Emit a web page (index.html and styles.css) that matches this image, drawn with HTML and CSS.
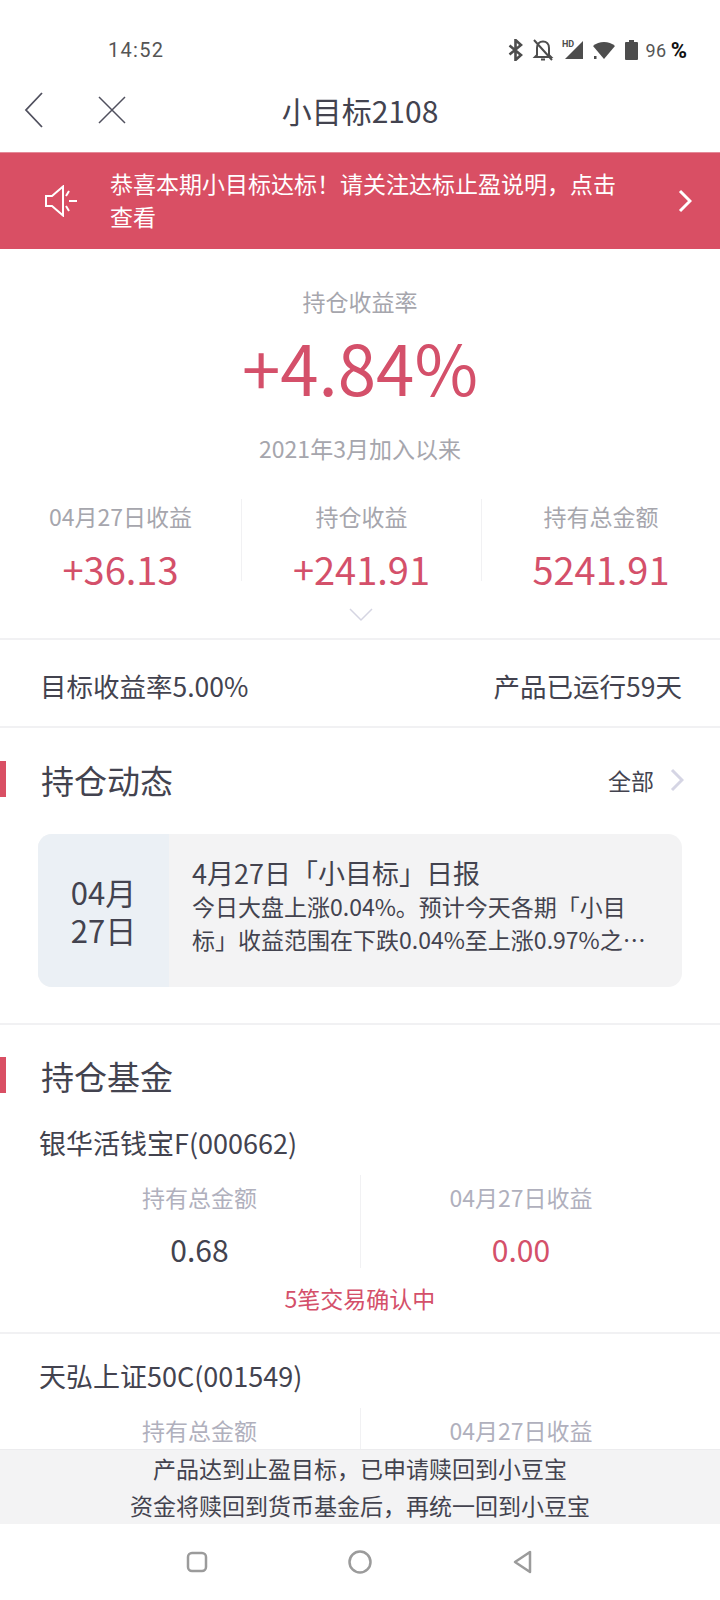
FILE: index.html
```html
<!DOCTYPE html>
<html lang="zh-CN">
<head>
  <meta charset="UTF-8">
  <meta name="viewport" content="width=device-width, initial-scale=1.0">
  <title>小目标2108</title>
  <link rel="stylesheet" href="styles.css">
</head>
<body>
  <div class="phone">
    <!-- Status bar -->
    <div class="status-bar">
      <span class="time">14:52</span>
      <div class="status-icons">
        <svg width="16" height="22" viewBox="0 0 16 22"><path d="M1.5 6.500 13 16l-5.500 5V1L13 6 1.500 15.500" fill="none" stroke="#4d4d4d" stroke-width="2.600"/></svg>
        <svg width="22" height="24" viewBox="0 0 22 24"><path d="M5 17V10c0-4 2.500-6.500 6-6.500s6 2.500 6 6.500v7l2 2H3zM9 21.500h4M2 2l18 20" fill="none" stroke="#4d4d4d" stroke-width="2"/></svg>
        <svg width="22" height="22" viewBox="0 0 22 22"><path d="M21 2v18H3z" fill="#4d4d4d"/><text x="0" y="8" class="hd">HD</text></svg>
        <svg width="24" height="22" viewBox="0 0 24 22"><path d="M1 7c6-5.500 16-5.500 22 0L12 20z" fill="#4d4d4d"/><rect x="2" y="17" width="2.500" height="3" fill="#4d4d4d"/></svg>
        <svg class="battery-icon" width="13" height="22" viewBox="0 0 13 22"><path d="M4 1h5v2h3a1 1 0 0 1 1 1v16a1 1 0 0 1-1 1H1a1 1 0 0 1-1-1V4a1 1 0 0 1 1-1h3z" fill="#4d4d4d"/></svg>
        <span class="battery">96</span>
        <span class="percent">%</span>
      </div>
    </div>

    <!-- Nav -->
    <header class="nav">
      <svg class="nav-back" width="20" height="36" viewBox="0 0 20 36"><path d="M18 1 2 18l16 17" fill="none" stroke="#50505e" stroke-width="1.800"/></svg>
      <svg class="nav-close" width="28" height="28" viewBox="0 0 28 28"><path d="M1 1l26 26M27 1 1 27" fill="none" stroke="#50505e" stroke-width="1.500"/></svg>
      <h1>小目标2108</h1>
    </header>

    <!-- Notice -->
    <a class="notice">
      <svg class="notice-icon" width="34" height="32" viewBox="0 0 34 32"><path d="M2 11h6L19 1.500v29L8 21H2z M25 6l-3 5M25 16h8M25 26l-3-5" fill="none" stroke="#fff" stroke-width="2"/></svg>
      <p>恭喜本期小目标达标！请关注达标止盈说明，点击查看</p>
      <svg class="notice-arrow" width="14" height="24" viewBox="0 0 14 24"><path d="M2 2l10 10L2 22" fill="none" stroke="#fff" stroke-width="3"/></svg>
    </a>

    <!-- Summary -->
    <section class="summary">
      <div class="summary-label">持仓收益率</div>
      <div class="summary-rate">+4.84%</div>
      <div class="summary-label since">2021年3月加入以来</div>
      <div class="stats">
        <div class="stat"><span class="stat-label">04月27日收益</span><span class="stat-value">+36.13</span></div>
        <div class="stat"><span class="stat-label">持仓收益</span><span class="stat-value">+241.91</span></div>
        <div class="stat"><span class="stat-label">持有总金额</span><span class="stat-value">5241.91</span></div>
      </div>
      <svg class="expand" width="24" height="14" viewBox="0 0 24 14"><path d="M1 1l11 11L23 1" fill="none" stroke="#d5d5e2" stroke-width="1.500"/></svg>
    </section>

    <div class="target-row">
      <span>目标收益率5.00%</span>
      <span>产品已运行59天</span>
    </div>

    <!-- Holdings news -->
    <section class="block news">
      <div class="block-head">
        <h2>持仓动态</h2>
        <span class="more">全部
          <svg width="14" height="24" viewBox="0 0 14 24"><path d="M2 2l10 10L2 22" fill="none" stroke="#d5d5e4" stroke-width="3"/></svg>
        </span>
      </div>
      <div class="news-card">
        <div class="news-date">04月<br>27日</div>
        <div class="news-body">
          <h3>4月27日「小目标」日报</h3>
          <p>今日大盘上涨0.04%。预计今天各期「小目标」收益范围在下跌0.04%至上涨0.97%之间，具体以实际收益为准。</p>
        </div>
      </div>
    </section>

    <!-- Funds -->
    <section class="funds">
      <div class="block-head">
        <h2>持仓基金</h2>
      </div>
      <div class="fund fund-first">
        <div class="fund-name">银华活钱宝F(000662)</div>
        <div class="fund-cols">
          <div class="fund-col"><span class="fund-label">持有总金额</span><span class="fund-value">0.68</span></div>
          <div class="fund-col"><span class="fund-label">04月27日收益</span><span class="fund-value red">0.00</span></div>
        </div>
        <div class="fund-note">5笔交易确认中</div>
      </div>
      <div class="fund">
        <div class="fund-name">天弘上证50C(001549)</div>
        <div class="fund-cols">
          <div class="fund-col"><span class="fund-label">持有总金额</span><span class="fund-value">1.20</span></div>
          <div class="fund-col"><span class="fund-label">04月27日收益</span><span class="fund-value red">0.00</span></div>
        </div>
      </div>
    </section>

    <!-- Bottom notice + system nav -->
    <div class="bottom">
      <div class="bottom-tip">
        <p>产品达到止盈目标，已申请赎回到小豆宝</p>
        <p>资金将赎回到货币基金后，再统一回到小豆宝</p>
      </div>
      <nav class="sys-nav">
        <svg width="22" height="24" viewBox="0 0 22 24"><rect x="2" y="3" width="18" height="18" rx="4" fill="none" stroke="#9b9b9b" stroke-width="2.500"/></svg>
        <svg width="26" height="26" viewBox="0 0 26 26"><circle cx="13" cy="13" r="10.500" fill="none" stroke="#9b9b9b" stroke-width="2.500"/></svg>
        <svg width="22" height="26" viewBox="0 0 22 26"><path d="M18 3v20L3 13z" fill="none" stroke="#9b9b9b" stroke-width="2.500" stroke-linejoin="round"/></svg>
      </nav>
    </div>
  </div>
</body>
</html>
```

FILE: styles.css
```css
/* General */
* {
  box-sizing: border-box;
}

body {
  margin: 0;
  background: #fff;
  font-family: "Noto Sans CJK SC", "Noto Sans", sans-serif;
  color: #43434f;
}

h1, h2, h3, p {
  margin: 0;
  font-weight: 400;
}

.phone {
  position: relative;
  width: 720px;
  height: 1600px;
  overflow: hidden;
}

/* Status bar */
.status-bar {
  height: 78px;
  padding: 36px 33px 0 108px;
  display: flex;
  justify-content: space-between;
  align-items: flex-start;
  font-family: Roboto, sans-serif;
  color: #555;
}

.time {
  font-size: 20px;
  line-height: 28px;
  letter-spacing: 1.300px;
}

.status-icons {
  display: flex;
  align-items: center;
  gap: 8px;
  height: 28px;
}

.battery-icon {
  margin-left: 1px;
}

.hd {
  font: 700 9px Roboto, sans-serif;
  fill: #4d4d4d;
}

.battery {
  font-size: 18px;
  letter-spacing: 0.5px;
}

.percent {
  font-size: 22px;
  font-weight: 700;
  color: #111;
  margin-left: -4px;
}

/* Nav */
.nav {
  position: relative;
  height: 74px;
  display: flex;
  align-items: center;
  justify-content: center;
}

.nav h1 {
  font-size: 30px;
  line-height: 40px;
  margin-bottom: 10px;
}

.nav-back {
  position: absolute;
  left: 24px;
  top: 14px;
}

.nav-close {
  position: absolute;
  left: 98px;
  top: 18px;
}

/* Notice */
.notice {
  height: 97px;
  background: #d94f64;
  color: #fff;
  display: flex;
  align-items: center;
  padding: 0 28px 0 44px;
  border-top: 1px solid #e48a98;
}

.notice-icon {
  flex: none;
}

.notice p {
  flex: 1;
  margin: 0 50px 2px 32px;
  font-size: 23px;
  line-height: 33px;
}

.notice-arrow {
  flex: none;
}

/* Summary */
.summary {
  height: 391px;
  padding-top: 35px;
  text-align: center;
  position: relative;
  border-bottom: 2px solid #f1f1f3;
}

.summary-label {
  font-size: 23px;
  line-height: 34px;
  color: #a6a6ad;
}

.summary-rate {
  font-size: 69px;
  font-weight: 400;
  line-height: 94px;
  color: #d4506a;
  margin-top: 1px;
}

.since {
  margin-top: 18px;
}

.stats {
  display: grid;
  grid-template-columns: 241px 240px 239px;
  margin-top: 34px;
}

.stat {
  display: flex;
  flex-direction: column;
  align-items: center;
  height: 82px;
  border-left: 1px solid #f1f1f3;
}

.stat:first-child {
  border-left: none;
}

.stat-label {
  font-size: 23px;
  line-height: 34px;
  color: #a6a6ad;
}

.stat-value {
  font-size: 38px;
  line-height: 52px;
  margin-top: 10px;
  color: #d4506a;
}

.expand {
  position: absolute;
  left: 349px;
  top: 359px;
}

.target-row {
  height: 88px;
  display: flex;
  justify-content: space-between;
  align-items: center;
  padding: 4px 38px 0 40px;
  font-size: 26.500px;
  border-bottom: 2px solid #f1f1f3;
}

/* Blocks */
.block {
  border-bottom: 2px solid #f1f1f3;
}

.block-head {
  height: 74px;
  display: flex;
  align-items: center;
  justify-content: space-between;
  padding: 0 36px 0 41px;
  position: relative;
}

.block-head::before {
  content: "";
  position: absolute;
  left: 0;
  top: 18px;
  width: 6px;
  height: 36px;
  background: #d94f64;
}

.block-head h2 {
  font-size: 33px;
  line-height: 44px;
}

.more {
  display: flex;
  align-items: center;
  gap: 16px;
  font-size: 23px;
}

.news {
  padding-top: 15px;
  height: 297px;
}

.news-card {
  margin: 17px 38px 0;
  height: 153px;
  display: flex;
  background: #f3f3f4;
  border-radius: 14px;
  overflow: hidden;
}

.news-date {
  flex: none;
  width: 131px;
  background: #ebf0f5;
  font-size: 31px;
  line-height: 38px;
  text-align: center;
  display: flex;
  align-items: center;
  justify-content: center;
  padding-top: 1px;
}

.news-body {
  padding: 21px 24px 0 23px;
}

.news-body h3 {
  font-size: 27px;
  line-height: 35px;
}

.news-body p {
  font-size: 23px;
  line-height: 33px;
  display: -webkit-box;
  -webkit-box-orient: vertical;
  -webkit-line-clamp: 2;
  overflow: hidden;
}

/* Funds */
.funds {
  padding-top: 14px;
}

.fund {
  padding-top: 24px;
  border-bottom: 2px solid #f1f1f3;
  height: 245px;
}

.fund-first {
  padding-top: 12px;
  height: 221px;
}

.fund-name {
  font-size: 27px;
  line-height: 36px;
  padding-left: 39px;
}

.fund-cols {
  display: grid;
  grid-template-columns: 1fr 1fr;
  margin-top: 14px;
  padding: 0 39px;
}

.fund-col {
  display: flex;
  flex-direction: column;
  align-items: center;
  height: 93px;
}

.fund-col + .fund-col {
  border-left: 1px solid #f1f1f3;
}

.fund-label {
  font-size: 23px;
  line-height: 44px;
  color: #b0b0bd;
}

.fund-value {
  font-size: 30px;
  line-height: 44px;
  margin-top: 8px;
}

.red {
  color: #d4506a;
}

.fund-note {
  margin-top: 13px;
  text-align: center;
  font-size: 23px;
  line-height: 34px;
  color: #d4506a;
}

/* Bottom */
.bottom {
  position: absolute;
  left: 0;
  right: 0;
  bottom: 0;
  background: #fff;
}

.bottom-tip {
  height: 75px;
  background: #f3f3f4;
  text-align: center;
  font-size: 23px;
  line-height: 37px;
  border-top: 1px solid #ececee;
}

.sys-nav {
  height: 76px;
  display: grid;
  grid-template-columns: repeat(3, 163px);
  justify-content: center;
  justify-items: center;
  align-items: center;
}
```
